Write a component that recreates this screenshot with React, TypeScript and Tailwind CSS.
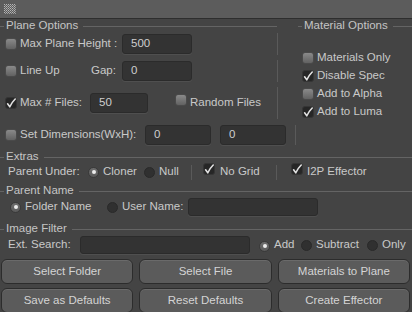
import React from "react";

const font = { fontFamily: '"Liberation Sans", Arial, sans-serif' };

const Check = ({ on }: { on?: boolean }) =>
  on ? (
    <span className="relative inline-block w-[12px] h-[12px] shrink-0 rounded-[3px] bg-[#262626] border border-[#353535]">
      <svg viewBox="0 0 12 12" className="absolute left-[-1px] top-[-1px] w-[12px] h-[12px]">
        <path d="M2.6 6.8 L4.8 9.8 Q6.6 5.6 10.2 2" fill="none" stroke="#e2e2e2" strokeWidth="1.6" strokeLinecap="round" strokeLinejoin="round" />
      </svg>
    </span>
  ) : (
    <span className="inline-block w-[12px] h-[12px] shrink-0 rounded-[3px] bg-gradient-to-b from-[#8a8a8a] to-[#626262] border border-[#4a4a4a]" />
  );

const Radio = ({ on }: { on?: boolean }) =>
  on ? (
    <span className="inline-flex items-center justify-center w-[11px] h-[11px] shrink-0 rounded-full bg-gradient-to-b from-[#6e6e6e] to-[#5a5a5a] border border-[#3a3a3a]">
      <span className="w-[4px] h-[4px] rounded-full bg-[#ececec]" />
    </span>
  ) : (
    <span className="inline-block w-[11px] h-[11px] shrink-0 rounded-full bg-[#303030] border border-[#2a2a2a]" />
  );

const Field = ({ w, h = "h-[20px]", value }: { w: string; h?: string; value?: string }) => (
  <div className={`${w} ${h} shrink-0 flex items-center pl-[8px] rounded-[3px] bg-[#333333] border border-[#2b2b2b] shadow-[0_1px_0_#4f4f4f] text-[#cfcfcf]`}>
    {value}
  </div>
);

const VLine = ({ h = "h-[22px]" }: { h?: string }) => <div className={`w-px ${h} shrink-0 bg-[#5a5a5a]`} />;

const Header = ({ title, w = "w-full" }: { title: string; w?: string }) => (
  <div className={`${w} h-[14px] flex items-center`}>
    <div className="w-[4px] h-px bg-[#646464]" />
    <span className="ml-[2px] text-[#c4c4c4] leading-none">{title}</span>
    <div className="flex-1 ml-[5px] h-px bg-[#646464]" />
  </div>
);

const Btn = ({ label }: { label: string }) => (
  <div className="flex-1 h-[25px] flex items-center justify-center rounded-[6px] bg-[#5b5b5b] border border-[#2c2c2c] text-[#d4d4d4] shadow-[inset_0_1px_0_#6a6a6a]">
    {label}
  </div>
);

export default function App() {
  return (
    <div className="w-[412px] h-[312px] overflow-hidden bg-[#444444] text-[#c9c9c9] text-[11.5px] select-none" style={font}>
      {/* grip bar */}
      <div className="h-[19px] bg-[#5c5c5c] border-b border-[#2e2e2e] flex items-center pl-[4px]">
        <svg width="12" height="10" viewBox="0 0 12 10">
          <defs>
            <pattern id="grip" width="2" height="2" patternUnits="userSpaceOnUse">
              <rect x="0" y="0" width="1" height="1" fill="#b5b5b5" />
              <rect x="1" y="1" width="1" height="1" fill="#9a9a9a" />
            </pattern>
          </defs>
          <rect width="12" height="10" fill="url(#grip)" />
        </svg>
      </div>

      <div className="flex">
        {/* plane options */}
        <div className="w-[298px] shrink-0">
          <Header title="Plane Options" w="w-[277px]" />
          <div className="flex flex-col gap-[7px] mt-[1px] pl-[5px]">
            <div className="flex items-center h-[20px]">
              <Check />
              <span className="ml-[3px] w-[102px]">Max Plane Height :</span>
              <Field w="w-[70px]" value="500" />
              <div className="ml-[85px]"><VLine /></div>
            </div>
            <div className="flex items-center h-[20px]">
              <Check />
              <span className="ml-[3px] w-[71px]">Line Up</span>
              <span className="w-[31px]">Gap:</span>
              <Field w="w-[70px]" value="0" />
              <div className="ml-[85px]"><VLine /></div>
            </div>
          </div>
          <div className="flex flex-col gap-[12px] mt-[12px] pl-[5px]">
            <div className="flex items-center h-[20px]">
              <Check on />
              <span className="ml-[3px] w-[70px]">Max # Files:</span>
              <Field w="w-[58px]" value="50" />
              <span className="ml-[27px]"><Check /></span>
              <span className="ml-[3px] w-[87px]">Random Files</span>
              <div className="-my-[6px]"><VLine h="h-[32px]" /></div>
            </div>
            <div className="flex items-center h-[20px]">
              <Check />
              <span className="ml-[3px] w-[125px]">Set Dimensions(WxH):</span>
              <Field w="w-[66px]" value="0" />
              <div className="ml-[9px]"><Field w="w-[66px]" value="0" /></div>
              <div className="ml-[9px]"><VLine h="h-[20px]" /></div>
            </div>
          </div>
        </div>

        {/* material options */}
        <div className="flex-1">
          <Header title="Material Options" />
          <div className="mt-[16px] pl-[4px] flex flex-col">
            {[
              ["Materials Only", false],
              ["Disable Spec", true],
              ["Add to Alpha", false],
              ["Add to Luma", true],
            ].map(([label, on]) => (
              <div key={label as string} className="h-[18px] flex items-center">
                <Check on={on as boolean} />
                <span className="ml-[3px]">{label as string}</span>
              </div>
            ))}
          </div>
        </div>
      </div>

      {/* extras */}
      <div className="mt-[5px]">
        <Header title="Extras" />
      </div>
      <div className="h-[16px] flex items-center pl-[8px]">
        <span className="w-[80px]">Parent Under:</span>
        <Radio on />
        <span className="ml-[4px] w-[41px]">Cloner</span>
        <Radio />
        <span className="ml-[4px] w-[32px]">Null</span>
        <VLine h="h-[15px]" />
        <span className="ml-[11px]"><Check on /></span>
        <span className="ml-[5px] w-[56px]">No Grid</span>
        <VLine h="h-[15px]" />
        <span className="ml-[14px]"><Check on /></span>
        <span className="ml-[4px]">I2P Effector</span>
      </div>

      {/* parent name */}
      <div className="mt-[4px]">
        <Header title="Parent Name" />
      </div>
      <div className="h-[18px] flex items-center pl-[10px]">
        <Radio on />
        <span className="ml-[4px] w-[82px]">Folder Name</span>
        <Radio />
        <span className="ml-[4px] w-[66px]">User Name:</span>
        <Field w="w-[130px]" h="h-[18px]" />
      </div>

      {/* image filter */}
      <div className="mt-[6px]">
        <Header title="Image Filter" />
      </div>
      <div className="h-[18px] flex items-center pl-[8px]">
        <span className="w-[72px]">Ext. Search:</span>
        <Field w="w-[170px]" h="h-[18px]" />
        <span className="ml-[9px]"><Radio on /></span>
        <span className="ml-[4px] w-[27px]">Add</span>
        <Radio />
        <span className="ml-[4px] w-[51px]">Subtract</span>
        <Radio />
        <span className="ml-[4px]">Only</span>
      </div>

      {/* buttons */}
      <div className="mt-[5px] flex flex-col gap-[4px] pl-[1px] pr-[2px]">
        <div className="flex gap-[6px]">
          <Btn label="Select Folder" />
          <Btn label="Select File" />
          <Btn label="Materials to Plane" />
        </div>
        <div className="flex gap-[6px]">
          <Btn label="Save as Defaults" />
          <Btn label="Reset Defaults" />
          <Btn label="Create Effector" />
        </div>
      </div>
    </div>
  );
}
